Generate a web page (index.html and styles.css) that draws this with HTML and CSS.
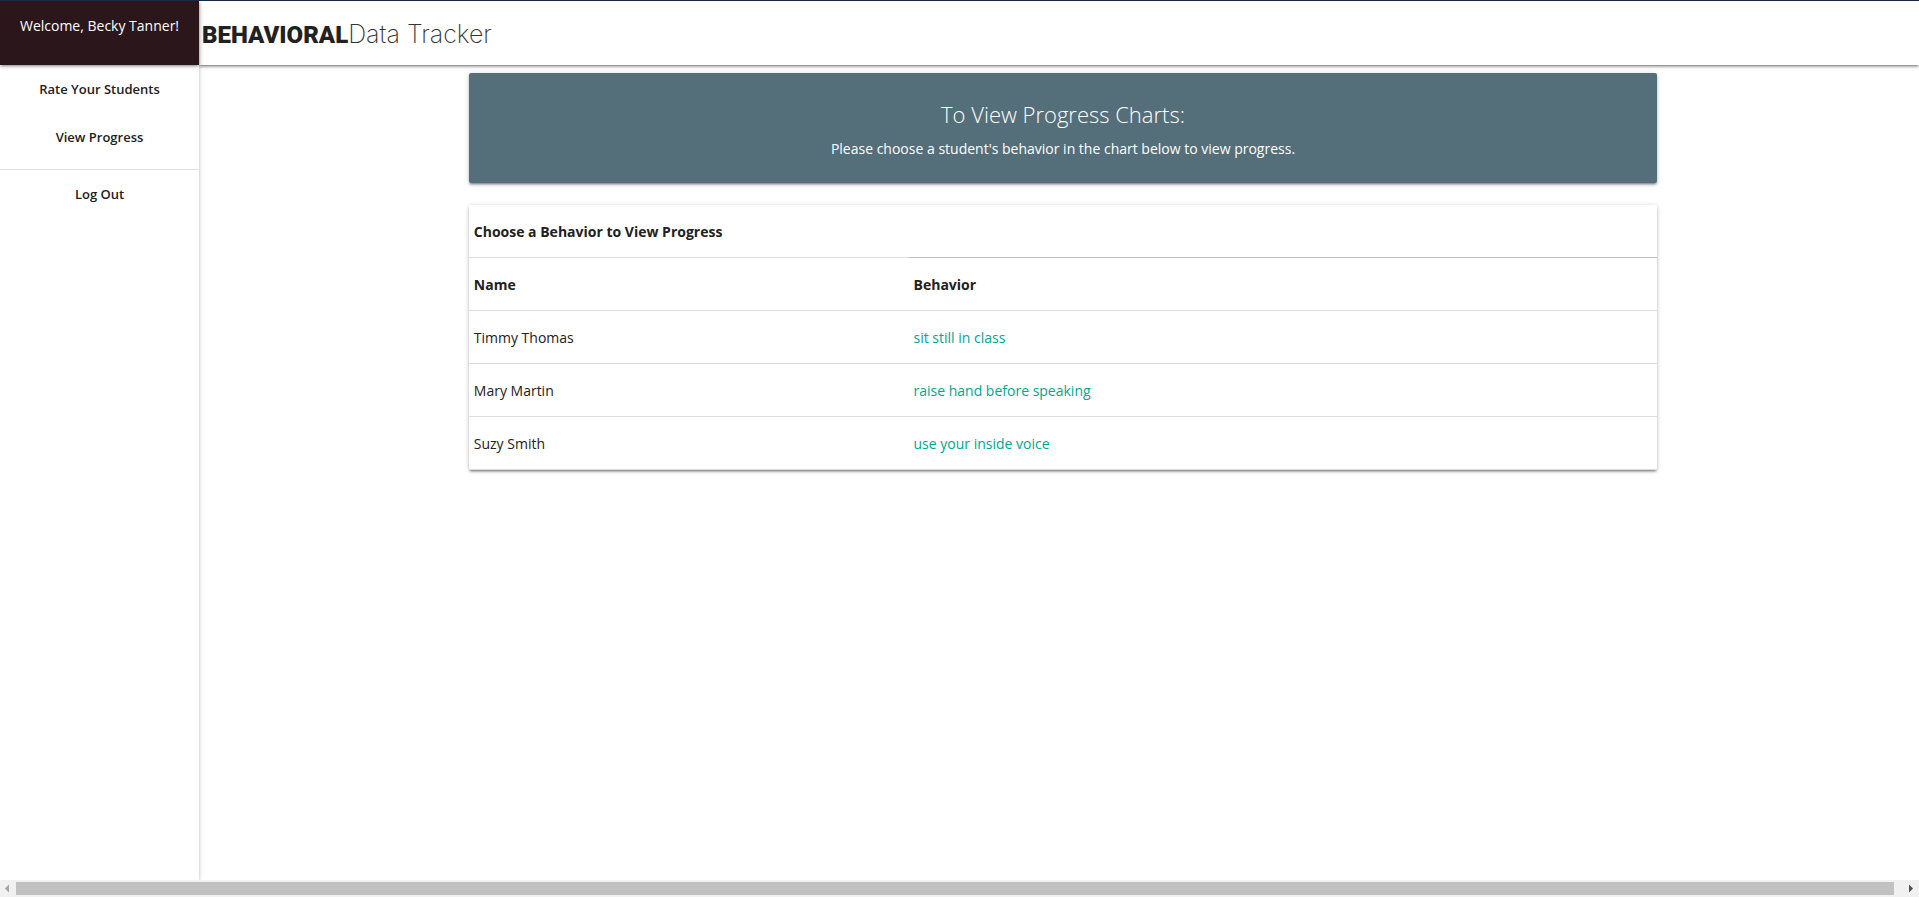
FILE: index.html
```html
<!DOCTYPE html>
<html lang="en">
<head>
<meta charset="utf-8">
<title>Behavioral Data Tracker</title>
<link rel="stylesheet" href="styles.css">
</head>
<body>
<div class="app">
  <aside class="sidebar">
    <div class="welcome">Welcome, Becky Tanner!</div>
    <nav class="menu">
      <a href="#">Rate Your Students</a>
      <a href="#">View Progress</a>
      <hr class="divider">
      <a href="#">Log Out</a>
    </nav>
  </aside>
  <div class="page">
    <header class="topbar">
      <a class="logo" href="#"><span class="logo-bold">BEHAVIORAL</span><span class="logo-thin">Data Tracker</span></a>
    </header>
    <main class="content">
      <div class="container">
        <section class="banner">
          <h1>To View Progress Charts:</h1>
          <p>Please choose a student's behavior in the chart below to view progress.</p>
        </section>
        <section class="card">
          <table>
            <thead>
              <tr class="caption-row"><th>Choose a Behavior to View Progress</th><td></td></tr>
              <tr><th>Name</th><th>Behavior</th></tr>
            </thead>
            <tbody>
              <tr><td>Timmy Thomas</td><td><a href="#">sit still in class</a></td></tr>
              <tr><td>Mary Martin</td><td><a href="#">raise hand before speaking</a></td></tr>
              <tr><td>Suzy Smith</td><td><a href="#">use your inside voice</a></td></tr>
            </tbody>
          </table>
        </section>
      </div>
    </main>
  </div>
</div>
<div class="scrollbar">
  <button type="button" aria-label="Scroll left"><svg width="16" height="17" viewBox="0 0 16 17"><path d="M5 8.500L9 4.500V12.500Z" fill="#a3a3a3"/></svg></button>
  <div class="track"><div class="thumb"></div></div>
  <button type="button" aria-label="Scroll right"><svg width="16" height="17" viewBox="0 0 16 17"><path d="M10 8.500L6 4.500V12.500Z" fill="#505050"/></svg></button>
</div>
</body>
</html>
```
FILE: styles.css
```css
* { box-sizing: border-box; }
body {
  margin: 0;
  min-height: 100vh;
  display: flex;
  flex-direction: column;
  border-top: 1px solid #172b45;
  background: #fff;
  color: #212121;
  font: 14px/22px "Open Sans", "Noto Sans", sans-serif;
}
a { color: inherit; text-decoration: none; }
.app { flex: 1; display: flex; }
.sidebar {
  flex: 0 0 199px;
  position: relative;
  z-index: 2;
  background: #fff;
  box-shadow: 0 2px 2px rgba(0,0,0,.14), 0 3px 1px -2px rgba(0,0,0,.12), 0 1px 5px rgba(0,0,0,.2);
}
.welcome {
  height: 64px;
  padding-top: 14px;
  background: #2b161b;
  color: #fff;
  text-align: center;
  box-shadow: 0 2px 2px rgba(0,0,0,.14), 0 3px 1px -2px rgba(0,0,0,.12), 0 1px 5px rgba(0,0,0,.2);
}
.menu a {
  display: block;
  text-align: center;
  font-size: 13px;
  font-weight: 600;
  line-height: 48px;
}
.divider { margin: 8px 0 0; border: 0; border-top: 1px solid #e0e0e0; }
.page { flex: 1; min-width: 0; }
.topbar {
  height: 64px;
  padding: 2px 0 0 3px;
  display: flex;
  align-items: center;
  background: #fff;
}
.logo { display: flex; align-items: baseline; line-height: 32px; }
.logo-bold { font-family: Roboto, sans-serif; font-size: 24px; font-weight: 900; }
.logo-thin { font-family: Inter, sans-serif; font-size: 25px; font-weight: 200; color: #333; }
.content { padding: 8px 0 0 8px; }
.container { width: 70%; margin: 0 auto; padding: 0 5px; }
.banner {
  padding: 24px;
  border-radius: 2px;
  background: #546e7a;
  color: #fff;
  text-align: center;
}
.topbar, .banner, .card { box-shadow: 0 2px 2px rgba(0,0,0,.2), 0 3px 1px -2px rgba(0,0,0,.16), 0 1px 5px rgba(0,0,0,.2); }
.banner h1 { margin: 0 0 8px; font-size: 22px; line-height: 34px; font-weight: 300; }
.banner p { margin: 0; line-height: 20px; }
.card { margin-top: 22px; border-radius: 2px; background: #fff; }
table { width: 100%; table-layout: fixed; border-collapse: separate; border-spacing: 0; }
th, td { height: 53px; padding: 2px 5px 0; border-bottom: 1px solid #ddd; text-align: left; font-weight: 400; }
th { font-weight: 700; }
th:first-child { width: 37%; }
.caption-row td { border-bottom-color: #bfbfbf; }
td a { color: #00a693; }
.scrollbar { flex: 0 0 17px; position: relative; z-index: 3; display: flex; background: #f1f1f1; }
.scrollbar button { width: 16px; padding: 0; border: 0; background: none; line-height: 0; }
.track { flex: 1; padding: 2px 0; }
.thumb { width: 99.5%; height: 13px; background: #c1c1c1; }
```
